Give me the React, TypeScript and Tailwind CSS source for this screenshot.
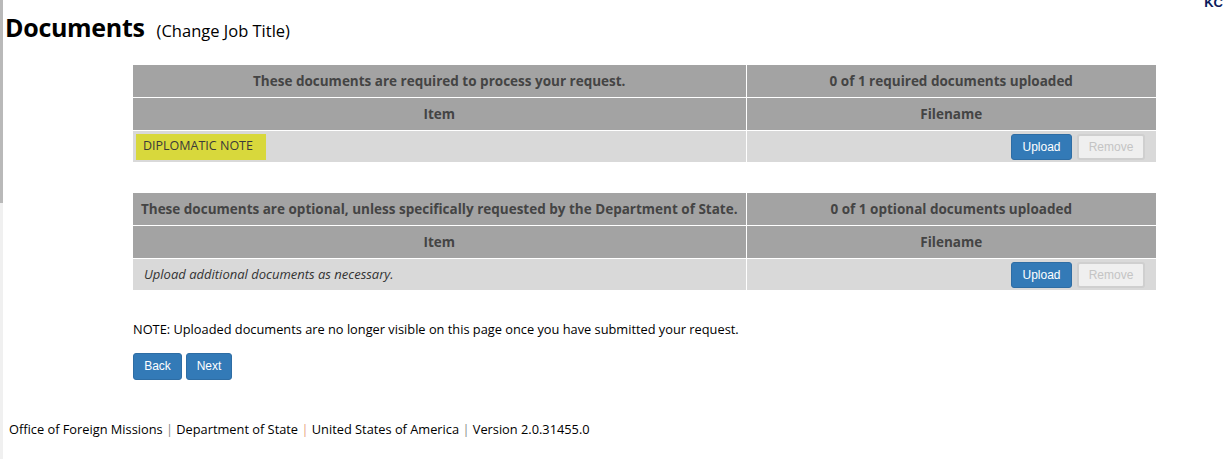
import React from 'react';

const body = "font-['Open_Sans',sans-serif]";

function DocTable({
  title,
  count,
  children,
}: {
  title: string;
  count: string;
  children: React.ReactNode;
}) {
  return (
    <table className={`w-[1023px] border-collapse text-[13.5px] ${body}`}>
      <colgroup>
        <col className="w-[613px]" />
        <col />
      </colgroup>
      <thead>
        <tr className="h-[33px] bg-[#a3a3a3] font-bold text-[#444]">
          <th className="border-r border-b border-white text-center">{title}</th>
          <th className="border-b border-white text-center">{count}</th>
        </tr>
        <tr className="h-[33px] bg-[#a3a3a3] font-bold text-[#444]">
          <th className="border-r border-b border-white text-center">Item</th>
          <th className="border-b border-white text-center">Filename</th>
        </tr>
      </thead>
      <tbody>
        <tr className="h-[31px] bg-[#d9d9d9]">
          <td className="h-[31px] border-r border-white px-[3px] py-0 align-middle">{children}</td>
          <td className="h-[31px] pr-[11px] py-0 align-middle">
            <div className="flex justify-end gap-[5px]">
              <button className="h-[26px] w-[61px] rounded-[3px] border border-[#2e6da4] bg-[#337ab7] text-[12px] text-white font-['Liberation_Sans',Arial,sans-serif]">
                Upload
              </button>
              <button className="h-[26px] w-[68px] rounded-[3px] border-2 border-[#cfcfcf] bg-[#efefef] text-[12px] text-[#c4c4c4] font-['Liberation_Sans',Arial,sans-serif]">
                Remove
              </button>
            </div>
          </td>
        </tr>
      </tbody>
    </table>
  );
}

export default function App() {
  return (
    <div className="flex min-h-[459px] bg-white">
      {/* left frame edge */}
      <div className="flex w-[3px] shrink-0 flex-col">
        <div className="h-[203px] bg-[#b9b9b9]" />
        <div className="flex-1 bg-[#f0f0f0]" />
      </div>

      <div className="flex-1">
        <div className="flex h-[9px] justify-end overflow-hidden pr-[2px]">
          <span className="-mt-[4px] text-[13px] font-bold leading-none text-[#0a1a5c] font-['Liberation_Sans',Arial,sans-serif]">
            KC
          </span>
        </div>

        <div className={`flex items-baseline pl-[2px] pt-[3px] ${body}`}>
          <h1 className="text-[25px] font-bold leading-[30px] tracking-[-0.3px] text-black">Documents</h1>
          <span className="ml-[12px] text-[16.5px] text-black">(Change Job Title)</span>
        </div>

        <div className="ml-[130px] mt-[21px]">
          <DocTable title="These documents are required to process your request." count="0 of 1 required documents uploaded">
            <div className="flex h-[26px] w-[130px] items-center bg-[#d8d83c] pl-[7px] text-[12.5px] text-[#3a3a3a]">
              DIPLOMATIC NOTE
            </div>
          </DocTable>

          <div className="h-[31px]" />

          <DocTable
            title="These documents are optional, unless specifically requested by the Department of State."
            count="0 of 1 optional documents uploaded"
          >
            <span className="pl-[8px] text-[13px] italic text-[#333]">Upload additional documents as necessary.</span>
          </DocTable>

          <p className={`mt-[30px] text-[12.8px] text-black ${body}`}>
            NOTE: Uploaded documents are no longer visible on this page once you have submitted your request.
          </p>

          <div className="mt-[14px] flex gap-[4px] font-['Liberation_Sans',Arial,sans-serif]">
            <button className="h-[27px] w-[49px] rounded-[3px] border border-[#2e6da4] bg-[#337ab7] text-[12px] text-white">
              Back
            </button>
            <button className="h-[27px] w-[46px] rounded-[3px] border border-[#2e6da4] bg-[#337ab7] text-[12px] text-white">
              Next
            </button>
          </div>
        </div>

        <div className={`mt-[40px] pl-[6px] text-[12.8px] text-black ${body}`}>
          Office of Foreign Missions <span className="text-[#888]">|</span> Department of State{' '}
          <span className="text-[#e8a080]">|</span> United States of America <span className="text-[#888]">|</span> Version
          2.0.31455.0
        </div>
      </div>
    </div>
  );
}
